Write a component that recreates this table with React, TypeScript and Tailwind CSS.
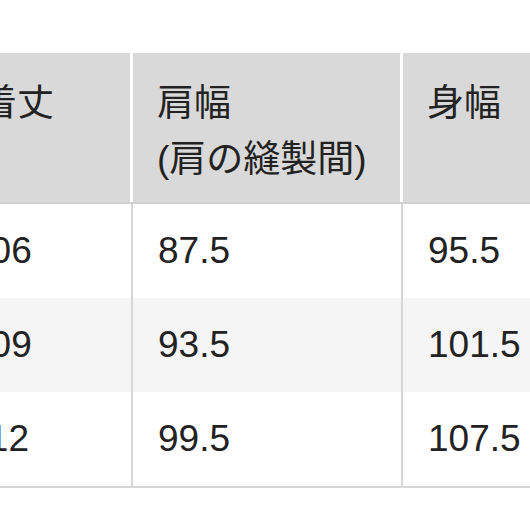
import React from "react";

const font = {
  fontFamily: '"Liberation Sans", "Noto Sans CJK JP", sans-serif',
};

const rows = [
  ["106", "87.5", "95.5"],
  ["109", "93.5", "101.5"],
  ["112", "99.5", "107.5"],
];

export default function App() {
  return (
    <div className="w-[530px] h-[530px] overflow-hidden bg-white text-[#222222]" style={font}>
      <div className="pt-[53px] ml-[-45px] w-[720px]">
        <div className="flex h-[151px] bg-[#d9d9d9] border-b-2 border-[#d0d0d0] text-[37px] leading-[56px]">
          <div className="w-[178px] shrink-0 border-r-[3px] border-white pl-[25px] pt-[23px]">着丈</div>
          <div className="w-[270px] shrink-0 border-r-[3px] border-white pl-[24px] pt-[23px]">
            <div>肩幅</div>
            <div>(肩の縫製間)</div>
          </div>
          <div className="flex-1 pl-[24px] pt-[23px]">身幅</div>
        </div>
        {rows.map((r, i) => (
          <div
            key={i}
            className={
              "flex items-center text-[37px] " +
              (i === 1 ? "bg-[#f5f5f5]" : "bg-white") +
              (i === 2 ? " border-b-2 border-[#d6d6d6] h-[96px]" : " h-[94px]")
            }
          >
            <div className="w-[178px] shrink-0 h-full flex items-center border-r-2 border-[#d6d6d6] pl-[15px]">{r[0]}</div>
            <div className="w-[270px] shrink-0 h-full flex items-center border-r-2 border-[#d6d6d6] pl-[25px]">{r[1]}</div>
            <div className="flex-1 h-full flex items-center pl-[25px]">{r[2]}</div>
          </div>
        ))}
      </div>
    </div>
  );
}
